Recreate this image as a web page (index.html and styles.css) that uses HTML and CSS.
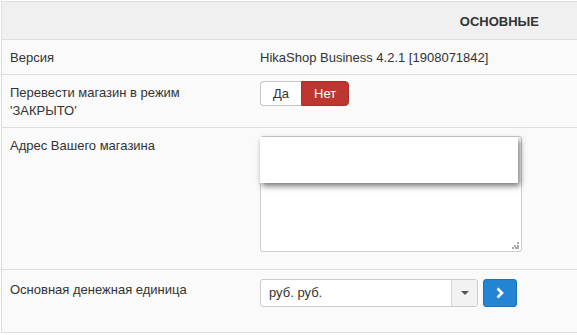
FILE: index.html
```html
<!DOCTYPE html>
<html lang="ru">
<head>
  <meta charset="UTF-8">
  <title>HikaShop - Основные</title>
  <link rel="stylesheet" href="styles.css">
</head>
<body>
  <div class="config-table">
    <div class="config-head">ОСНОВНЫЕ</div>

    <div class="config-row row-version">
      <div class="key">Версия</div>
      <div class="value">HikaShop Business 4.2.1 [1908071842]</div>
    </div>

    <div class="config-row">
      <div class="key">Перевести магазин в режим 'ЗАКРЫТО'</div>
      <div class="value">
        <div class="toggle">
          <span class="toggle-btn">Да</span>
          <span class="toggle-btn active-no">Нет</span>
        </div>
      </div>
    </div>

    <div class="config-row">
      <div class="key">Адрес Вашего магазина</div>
      <div class="value">
        <div class="textarea">
          <div class="editor-pop"></div>
          <svg class="grip" width="7" height="7" viewBox="0 0 7 7">
            <rect x="5" y="0" width="2" height="2" fill="#aaa"/>
            <rect x="2" y="3" width="2" height="2" fill="#aaa"/>
            <rect x="5" y="3" width="2" height="2" fill="#aaa"/>
            <rect x="0" y="5" width="2" height="2" fill="#aaa"/>
            <rect x="3" y="5" width="2" height="2" fill="#aaa"/>
            <rect x="5" y="5" width="2" height="2" fill="#aaa"/>
          </svg>
        </div>
      </div>
    </div>

    <div class="config-row row-currency">
      <div class="key">Основная денежная единица</div>
      <div class="value">
        <div class="currency">
          <div class="select">
            <span class="select-text">руб. руб.</span>
            <span class="select-arrow"><b class="caret"></b></span>
          </div>
          <button class="go-btn">
            <svg width="8" height="12" viewBox="0 0 8 12">
              <polyline points="1.5,1.5 6,6 1.5,10.5" fill="none" stroke="#fff" stroke-width="2.6"/>
            </svg>
          </button>
        </div>
      </div>
    </div>
  </div>
</body>
</html>
```

FILE: styles.css
```css
* {
  margin: 0;
  padding: 0;
  box-sizing: border-box;
}

body {
  font-family: "Liberation Sans", Arial, sans-serif;
  font-size: 13px;
  line-height: 18px;
  color: #333333;
  background-color: #ffffff;
  overflow: hidden;
}

.config-table {
  margin: 1px 0 0 1px;
  border: 1px solid #dddddd;
  border-right: none;
  background-color: #fafafa;
}

.config-head {
  height: 38px;
  padding: 11px 38px 0 0;
  text-align: right;
  font-weight: bold;
  background-color: #f0f0f0;
  border-bottom: 1px solid #dddddd;
}

.config-row {
  display: flex;
  border-bottom: 1px solid #dddddd;
}

.config-row:last-child {
  border-bottom: none;
}

.key {
  width: 258px;
  flex-shrink: 0;
  padding: 9px 55px 7px 8px;
}

.value {
  flex: 1;
  padding: 8px 0;
}

.row-version .value {
  padding-top: 9px;
  padding-bottom: 7px;
}

.toggle {
  display: inline-flex;
  margin-top: -2px;
}

.toggle-btn {
  height: 25px;
  padding: 3px 12px;
  border: 1px solid #c5c5c5;
  background-color: #ffffff;
  color: #333333;
}

.toggle-btn:first-child {
  border-radius: 4px 0 0 4px;
  border-right: none;
}

.toggle-btn.active-no {
  background-color: #bd362f;
  border-color: #a9302a;
  color: #ffffff;
  border-radius: 0 4px 4px 0;
}

.textarea {
  position: relative;
  width: 262px;
  height: 116px;
  margin-bottom: 9px;
  border: 1px solid #cccccc;
  border-radius: 3px;
  background-color: #ffffff;
}

.editor-pop {
  position: absolute;
  left: -1px;
  top: 0;
  width: 258px;
  height: 46px;
  background-color: #ffffff;
  box-shadow: 2px 3px 6px rgba(0, 0, 0, 0.55);
}

.grip {
  position: absolute;
  right: 2px;
  bottom: 2px;
}

.row-currency .value {
  padding-bottom: 25px;
}

.row-currency .key {
  padding-top: 11px;
}

.currency {
  display: flex;
  align-items: center;
  gap: 5px;
  margin-top: 1px;
}

.select {
  display: flex;
  width: 218px;
  height: 28px;
  border: 1px solid #cccccc;
  border-radius: 3px;
  background-color: #ffffff;
  overflow: hidden;
}

.select-text {
  flex: 1;
  padding: 4px 8px;
  line-height: 18px;
}

.select-arrow {
  width: 26px;
  display: flex;
  align-items: center;
  justify-content: center;
  background-color: #f2f2f2;
  border-left: 1px solid #d5d5d5;
}

.caret {
  width: 0;
  height: 0;
  border-left: 4px solid transparent;
  border-right: 4px solid transparent;
  border-top: 4px solid #555555;
}

.go-btn {
  width: 34px;
  height: 28px;
  display: flex;
  align-items: center;
  justify-content: center;
  border: 1px solid #1d6fb6;
  border-radius: 3px;
  background-color: #2384d3;
  cursor: pointer;
}
```
